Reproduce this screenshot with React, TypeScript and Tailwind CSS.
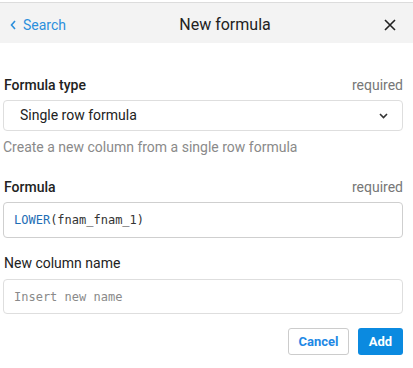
const ChevronLeft = () => (
  <svg width="6" height="10" viewBox="0 0 6 10" fill="none">
    <polyline points="5,1 1.5,5 5,9" stroke="#2b8fdc" strokeWidth="1.6" />
  </svg>
);

const CloseIcon = () => (
  <svg width="12" height="12" viewBox="0 0 12 12" fill="none">
    <path d="M1 1L11 11M11 1L1 11" stroke="#222" strokeWidth="1.6" />
  </svg>
);

const ChevronDown = () => (
  <svg width="9" height="6" viewBox="0 0 9 6" fill="none">
    <polyline points="1,1 4.5,4.5 8,1" stroke="#333" strokeWidth="1.6" />
  </svg>
);

const FieldLabel = ({ label, required, bold }: { label: string; required?: boolean; bold?: boolean }) => (
  <div className="flex items-center justify-between h-5 pl-px">
    <span className={`text-[14px] text-[#222] ${bold ? "font-medium" : ""}`}>{label}</span>
    {required && <span className="text-[14px] text-[#777]">required</span>}
  </div>
);

const App = () => {
  return (
    <div className="w-[413px] h-[368px] bg-white font-['Roboto',sans-serif] pt-[2px]">
      <div className="flex items-center h-[41px] pt-[3px] bg-[#f3f3f3] border-t border-[#dcdcdc]">
        <div className="flex items-center gap-[7px] pl-[10px] pt-px text-[14px] text-[#2b8fdc]">
          <ChevronLeft />
          <span>Search</span>
        </div>
        <div className="flex-1 text-center text-[16px] text-[#222]">New formula</div>
        <div className="pr-[17px] flex items-center">
          <CloseIcon />
        </div>
      </div>

      <div className="pl-[3px] pr-[10px] pt-[32px]">
        <FieldLabel label="Formula type" required bold />
        <div className="mt-[5px] h-[31px] flex items-center justify-between border border-[#dedede] rounded-[4px] pl-[16px] pr-[14px]">
          <span className="text-[14px] text-[#222]">Single row formula</span>
          <ChevronDown />
        </div>
        <div className="mt-[6px] h-5 text-[14px] text-[#8a8a8a] leading-5">Create a new column from a single row formula</div>

        <div className="mt-[20px]">
          <FieldLabel label="Formula" required bold />
        </div>
        <div className="mt-[5px] h-[36px] flex items-center border border-[#cfcfcf] rounded-[4px] pl-[10px] font-['DejaVu_Sans_Mono',monospace] text-[12px]">
          <span className="text-[#1d6eb5]">LOWER</span>
          <span className="text-[#333]">(fnam_fnam_1)</span>
        </div>

        <div className="mt-[15px]">
          <FieldLabel label="New column name" />
        </div>
        <div className="mt-[6px] h-[35px] flex items-center border border-[#dedede] rounded-[4px] pl-[10px] font-['DejaVu_Sans_Mono',monospace] text-[12px] text-[#8a8a8a]">
          Insert new name
        </div>

        <div className="mt-[14px] flex justify-end gap-[9px]">
          <button className="h-[27px] w-[61px] border border-[#cccccc] rounded-[3px] bg-white text-[13px] font-bold text-[#1e88e5]">
            Cancel
          </button>
          <button className="h-[27px] w-[45px] rounded-[3px] bg-[#0b8ae0] text-[13px] font-bold text-white">
            Add
          </button>
        </div>
      </div>
    </div>
  );
};

export default App;
